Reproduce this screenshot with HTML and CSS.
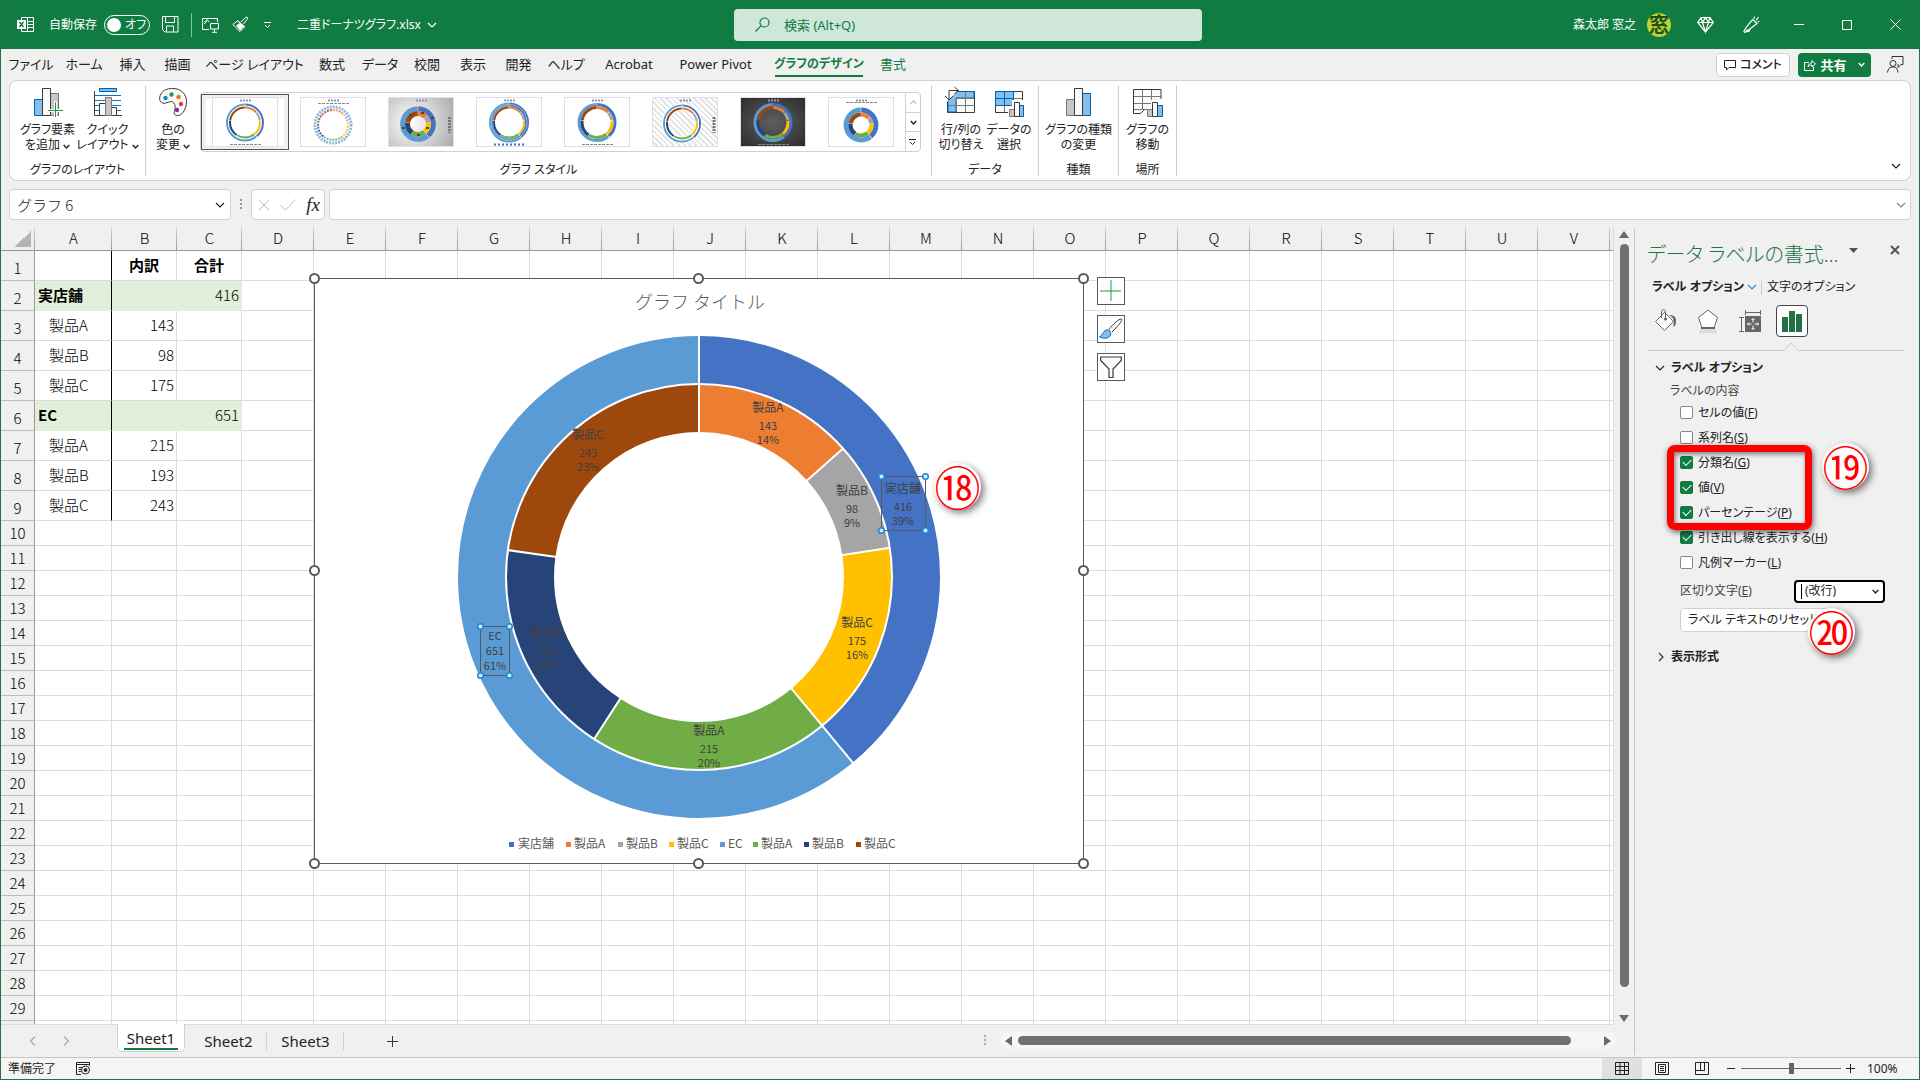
FILE: index.html
```html
<!DOCTYPE html>
<html lang="ja">
<head>
<meta charset="utf-8">
<meta name="viewport" content="width=device-width, initial-scale=1">
<title>二重ドーナツグラフ.xlsx - Excel</title>
<link rel="stylesheet" href="styles.css">
</head>
<body>
<svg class="defs" aria-hidden="true">
  <defs>
    <g id="ring-out" fill="none" transform="rotate(-90)">
      <circle r="18" pathLength="1067" stroke="#4472c4" stroke-dasharray="410 657" stroke-dashoffset="-3"/>
      <circle r="18" pathLength="1067" stroke="#5b9bd5" stroke-dasharray="645 422" stroke-dashoffset="-419"/>
    </g>
    <g id="ring-in" fill="none" transform="rotate(-90)">
      <circle r="15" pathLength="1067" stroke="#ed7d31" stroke-dasharray="137 930" stroke-dashoffset="-3"/>
      <circle r="15" pathLength="1067" stroke="#a5a5a5" stroke-dasharray="92 975" stroke-dashoffset="-146"/>
      <circle r="15" pathLength="1067" stroke="#ffc000" stroke-dasharray="169 898" stroke-dashoffset="-244"/>
      <circle r="15" pathLength="1067" stroke="#70ad47" stroke-dasharray="209 858" stroke-dashoffset="-419"/>
      <circle r="15" pathLength="1067" stroke="#264478" stroke-dasharray="187 880" stroke-dashoffset="-634"/>
      <circle r="15" pathLength="1067" stroke="#9e480e" stroke-dasharray="237 830" stroke-dashoffset="-827"/>
    </g>
    <g id="mini-title"><path d="M27 2.500h11" stroke="#999" stroke-width="2" stroke-dasharray="2 1"/></g>
    <g id="mini-legend"><path d="M17 46.500h31" stroke="#888" stroke-width="1" stroke-dasharray="3 1"/></g>
    <g id="chev"><path d="M1 1l4 4 4-4" fill="none" stroke="currentColor" stroke-width="1.200"/></g>
    <g id="chev-s"><path d="M1 1l4 4 4-4" fill="none" stroke="currentColor" stroke-width="2"/></g>
  </defs>
</svg>

<header class="titlebar">
  <div class="title-left">
    <svg width="17" height="17" viewBox="0 0 17 17" fill="none" stroke="#fff"><path d="M4.500 4V1.500h12v14h-12V13M10.500 1.500v14M10 5.500h6M10 8.500h6M10 11.500h6"/><path d="M0 4h9v9H0z" fill="#fff" stroke="none"/><path d="M2.500 6l4 5M6.500 6l-4 5" stroke="#107c41" stroke-width="1.500"/></svg>
    <span class="autosave">自動保存</span>
    <button class="toggle" aria-label="自動保存"><i></i>オフ</button>
    <button class="tb save" aria-label="上書き保存"><svg width="17" height="17" viewBox="0 0 17 17" fill="none" stroke="#fff"><path d="M.5.5h15.500v15.500H3L.5 13.500zM3.500.5v6h9v-6M4.500 16v-6h7v6"/></svg></button>
    <i class="tb-sep"></i>
    <button class="tb present" aria-label="表示"><svg width="18" height="16" viewBox="0 0 18 16" fill="none" stroke="#fff"><path d="M7 12.500H.5v-11h15V5M2.500 5L5 2.500 7 5M9 6.500h7.500v5.500H8.500V6.500zM12.500 12v3M10 15.300h5M2 7l3-3"/></svg></button>
    <button class="tb brush" aria-label="書式のコピー"><svg width="17" height="17" viewBox="0 0 17 17" fill="none" stroke="#fff"><path d="M9 6l5-5 2 1-4.500 6M5.500 4.500l7.500 6.500"/><path d="M5.500 5L.8 8.500 8 15.500l4.500-4.500z"/><path d="M4 9.500l4 5 4-4-4-3.500z" fill="#fff" stroke="none"/></svg></button>
    <button class="tb more" aria-label="クイック アクセス"><svg width="8" height="8" viewBox="0 0 8 8" fill="none" stroke="#fff"><path d="M0 1.500h7M1 4l2.500 2.500L6 4"/></svg></button>
    <button class="filename">二重ドーナツグラフ.xlsx <svg width="10" height="6"><use href="#chev"/></svg></button>
  </div>
  <label class="search"><svg width="15" height="15" viewBox="0 0 15 15" fill="none" stroke="#107c41" stroke-width="1.200"><circle cx="9.500" cy="5.500" r="4.500"/><path d="M6.200 8.700L.5 14.500"/></svg><input type="text" placeholder="検索 (Alt+Q)" aria-label="検索"></label>
  <div class="title-right">
    <span>森太郎 窓之</span>
    <span class="avatar">窓</span>
    <button class="win gem" aria-label="Premium"><svg width="17" height="16" viewBox="0 0 17 16" fill="none" stroke="#fff" stroke-width="1.200"><path d="M4 .7h9l3.300 4.800-7.800 9.500L.7 5.500zM.7 5.500h15.600M4 .7l1.500 4.800 3 9.500 3-9.500L13 .7M5.500 5.500l3-4.800 3 4.800"/></svg></button>
    <button class="win" aria-label="ペン"><svg width="17" height="18" viewBox="0 0 17 18" fill="none" stroke="#fff" stroke-width="1.200"><path d="M9.500 3.500l4.500 4L5.500 14 2 16.500 1 15.500l2-4zM7 13c-1 4-4 3-3 .5M11 3l.5-2.500M13 4.500L15.500 1M14.500 6l2-.5"/></svg></button>
    <button class="win" aria-label="最小化"><svg width="10" height="10"><path d="M0 4.500h10" stroke="#fff"/></svg></button>
    <button class="win" aria-label="最大化"><svg width="10" height="10"><path d="M.5.5h9v9h-9z" fill="none" stroke="#fff"/></svg></button>
    <button class="win" aria-label="閉じる"><svg width="11" height="11"><path d="M.5.5l10 10M10.500.5l-10 10" stroke="#fff"/></svg></button>
  </div>
</header>

<nav class="tabs">
  <div class="tablist">
    <a href="#">ファイル</a><a href="#">ホーム</a><a href="#">挿入</a><a href="#">描画</a><a href="#">ページ レイアウト</a><a href="#">数式</a><a href="#">データ</a><a href="#">校閲</a><a href="#">表示</a><a href="#">開発</a><a href="#">ヘルプ</a><a href="#">Acrobat</a><a href="#">Power Pivot</a><a href="#" class="ctx current">グラフのデザイン</a><a href="#" class="ctx">書式</a>
  </div>
  <div class="tab-actions">
    <button class="comment"><svg width="12" height="12" viewBox="0 0 12 12" fill="none" stroke="#222"><path d="M.5 1.500h11v7H5L2.500 11V8.500h-2z"/></svg>コメント</button>
    <button class="share"><svg width="12" height="12" viewBox="0 0 12 12" fill="none" stroke="#fff"><path d="M5 3.500H.5v8h9V8M4 8c.5-3 2-4 4-4V1.500L11.500 5 8 8V6C6 6 5 6.500 4 8z"/></svg>共有<svg width="7" height="5" viewBox="0 0 10 6"><use href="#chev-s"/></svg></button>
    <button class="person" aria-label="ユーザー"><svg width="17" height="17" viewBox="0 0 17 17" fill="none" stroke="#333"><circle cx="6" cy="7.500" r="3"/><path d="M.5 16.500c.5-4 2.500-5.500 5.500-5.500s4.500 1.500 5 5.500M5 3V.5h11v8h-2l-3 3V8"/></svg></button>
  </div>
</nav>

<section class="ribbon">
  <div class="group g-layout">
    <div class="group-body">
      <button class="big"><svg width="30" height="30" viewBox="0 0 30 30"><path d="M1.500 12.500h8v16h-8z" fill="#83beec" stroke="#0063b1"/><path d="M17.500 6.500h8v22h-8z" fill="#c8c6c4" stroke="#797774"/><path d="M9.500 1.500h8v27h-8z" fill="#fafafa" stroke="#3a3a38"/><path d="M22.500 14v16M15 23.500h15" stroke="#fff" stroke-width="3"/><path d="M22.500 15v15M15 23.500h15" stroke="#1e9b45"/></svg><span>グラフ要素<br>を追加 <svg width="7" height="5" viewBox="0 0 10 6"><use href="#chev-s"/></svg></span></button>
      <button class="big"><svg width="30" height="30" viewBox="0 0 30 30" fill="none"><path d="M2 8.500h26M2 13.500h26M2 18.500h26M2 23.500h26" stroke="#0078d4"/><path d="M6.500 1.500h17v3h-17z" fill="#83beec" stroke="#0063b1"/><path d="M1.500 4v24.500H29" stroke="#3a3a38"/><path d="M6.500 16.500h6v12h-6zM18.500 20.500h5v8h-5z" fill="#fafafa" stroke="#3a3a38"/><path d="M12.500 10.500h6v18h-6z" fill="#c8c6c4" stroke="#797774"/></svg><span>クイック<br>レイアウト <svg width="7" height="5" viewBox="0 0 10 6"><use href="#chev-s"/></svg></span></button>
    </div>
    <div class="group-name">グラフのレイアウト</div>
  </div>
  <div class="group g-style">
    <div class="group-body">
      <button class="big narrow"><svg width="30" height="30" viewBox="0 0 30 30"><path d="M15 1.500c8 0 13.500 5.500 13.500 13 0 7-4 13.500-8 14-4 .5-5-2-4-5s1-5.500-1-8c-3-3-7 2-11 .5C.5 14.500 1 9 4 5.500S11 1.500 15 1.500z" fill="#fafafa" stroke="#3a3a38"/><circle cx="7.500" cy="11" r="2.200" fill="#0a84d8"/><circle cx="13.500" cy="7.500" r="2.200" fill="#1e9b45"/><circle cx="20.500" cy="10" r="2.200" fill="#e57400"/><circle cx="23" cy="17" r="2.200" fill="#e83c3c"/><circle cx="19" cy="23" r="2.200" fill="#8a2da5"/></svg><span>色の<br>変更 <svg width="7" height="5" viewBox="0 0 10 6"><use href="#chev-s"/></svg></span></button>
      <div class="gallery">
        <button class="thumb selected" aria-label="スタイル 1"><svg width="64" height="48" viewBox="0 0 64 48"><use href="#mini-title"/><use href="#mini-legend"/><g transform="translate(32 24.500)"><use href="#ring-out" stroke-width="2"/><use href="#ring-in" stroke-width="2"/></g></svg></button>
        <button class="thumb" aria-label="スタイル 2"><svg width="64" height="48" viewBox="0 0 64 48"><use href="#mini-title"/><path d="M17 5.500h31" stroke="#888" stroke-dasharray="3 1"/><g transform="translate(32 27)"><circle r="18" fill="none" stroke="#8db9e6" stroke-width="3" stroke-dasharray="2 1"/><g opacity=".8"><use href="#ring-in" stroke-width="2"/></g><circle r="15" fill="none" stroke="#fff" stroke-width="3" stroke-dasharray="1 2"/></g></svg></button>
        <button class="thumb silver" aria-label="スタイル 3"><svg width="64" height="48" viewBox="0 0 64 48"><use href="#mini-title"/><path d="M60.500 19v16" stroke="#777" stroke-width="3" stroke-dasharray="2 1"/><g transform="translate(29 26)"><g transform="scale(.85)"><use href="#ring-out" stroke-width="6"/></g><g transform="scale(.7)"><use href="#ring-in" stroke-width="7"/></g><path d="M-16 4h3M13-6h3M-9-9h3M3-11h3M-1 11h3M8 4h3M-11 4h3" stroke="#444" stroke-width="2"/></g></svg></button>
        <button class="thumb" aria-label="スタイル 4"><svg width="64" height="48" viewBox="0 0 64 48"><use href="#mini-title"/><path d="M17 46.500h31" stroke="#4472c4" stroke-width="2" stroke-dasharray="2 2"/><g transform="translate(32 24.500)"><use href="#ring-out" stroke-width="4"/><circle r="18" fill="none" stroke="#9bc" stroke-width="1"/><use href="#ring-in" stroke-width="2"/></g></svg></button>
        <button class="thumb" aria-label="スタイル 5"><svg width="64" height="48" viewBox="0 0 64 48"><use href="#mini-title"/><use href="#mini-legend"/><g transform="translate(32 24.500)"><use href="#ring-out" stroke-width="3"/><use href="#ring-in" stroke-width="3"/></g></svg></button>
        <button class="thumb hatch" aria-label="スタイル 6"><svg width="64" height="48" viewBox="0 0 64 48"><use href="#mini-title"/><path d="M61 19v16" stroke="#777" stroke-width="3" stroke-dasharray="2 1"/><g transform="translate(29 25.500)"><circle r="18" fill="none" stroke="#fff" stroke-width="4"/><use href="#ring-out" stroke-width="2"/><circle r="15" fill="none" stroke="#fff" stroke-width="4"/><use href="#ring-in" stroke-width="2"/></g></svg></button>
        <button class="thumb dark" aria-label="スタイル 7"><svg width="64" height="48" viewBox="0 0 64 48"><use href="#mini-title"/><use href="#mini-legend"/><g transform="translate(32 24.500)"><use href="#ring-out" stroke-width="3"/><use href="#ring-in" stroke-width="3"/></g></svg></button>
        <button class="thumb" aria-label="スタイル 8"><svg width="64" height="48" viewBox="0 0 64 48"><use href="#mini-title"/><path d="M17 4.500h31" stroke="#888" stroke-dasharray="3 1"/><g transform="translate(32 27)"><g transform="scale(.83)"><use href="#ring-out" stroke-width="6"/></g><g transform="scale(.7)"><use href="#ring-in" stroke-width="6"/></g></g></svg></button>
        <div class="gal-nav">
          <button class="off" aria-label="上へ"><svg width="7" height="5" viewBox="0 0 10 6"><path d="M1 5l4-4 4 4" fill="none" stroke="#b5b5b5" stroke-width="1.500"/></svg></button>
          <button aria-label="下へ"><svg width="7" height="5" viewBox="0 0 10 6"><use href="#chev-s"/></svg></button>
          <button aria-label="その他"><svg width="8" height="8" viewBox="0 0 8 8" fill="none" stroke="#222"><path d="M0 1.500h7M1 4l2.500 2.500L6 4"/></svg></button>
        </div>
      </div>
    </div>
    <div class="group-name">グラフ スタイル</div>
  </div>
  <div class="group g-data">
    <div class="group-body">
      <button class="big mid"><svg width="30" height="32" viewBox="0 0 30 32" fill="none"><path d="M1.500 6.500h27v21h-27z" fill="#fafafa" stroke="#3a3a38"/><path d="M2 6.500h26V13H10v14H2z" fill="#83beec" stroke="#0063b1"/><path d="M10.500 13v14M19.500 7v20M2 20.500h27M10 13.500h18" stroke="#797774"/><path d="M1 16V4h12L1 17" fill="#fff"/><path d="M3 14.500V5.500h9M8.500 2l4 3.500-4 3.500M-1 11l4 4 4-4" stroke="#3a3a38"/></svg><span>行/列の<br>切り替え</span></button>
      <button class="big mid"><svg width="30" height="32" viewBox="0 0 30 32" fill="none"><path d="M1.500 6.500h27v21h-27z" fill="#fafafa" stroke="#3a3a38"/><path d="M1.500 6.500h18v14h-18z" fill="#83beec" stroke="#0063b1"/><path d="M10.500 7v13M2 13.500h17.500" stroke="#0063b1"/><path d="M20 13.500h8M10.500 21v6" stroke="#797774"/><path d="M14 22h4v-7h13v17H14z" fill="#fff"/><path d="M15.500 24.500h5v7h-5z" fill="#c8c6c4" stroke="#797774"/><path d="M25.500 20.500h4v11h-4z" fill="#83beec" stroke="#0063b1"/><path d="M20.500 17.500h5v14h-5z" fill="#fafafa" stroke="#3a3a38"/></svg><span>データの<br>選択</span></button>
    </div>
    <div class="group-name">データ</div>
  </div>
  <div class="group g-type">
    <div class="group-body">
      <button class="big"><svg width="30" height="30" viewBox="0 0 30 30"><path d="M2.500 12.500h8v16h-8z" fill="#c8c6c4" stroke="#797774"/><path d="M18.500 6.500h8v22h-8z" fill="#83beec" stroke="#0063b1"/><path d="M10.500 1.500h8v27h-8z" fill="#fafafa" stroke="#3a3a38"/></svg><span>グラフの種類<br>の変更</span></button>
    </div>
    <div class="group-name">種類</div>
  </div>
  <div class="group g-place">
    <div class="group-body">
      <button class="big mid"><svg width="30" height="32" viewBox="0 0 30 32" fill="none"><path d="M.5 4.500h27v23l-17 1H.5z" fill="#fafafa"/><path d="M1 11.500h27M1 18.500h27M1 24.500h27M9.500 5v20M18.500 5v20" stroke="#797774"/><path d="M14 22h4v-7h12v17H14z" fill="#fff"/><path d="M28 14V4.500H.5v24h7l4-4" stroke="#3a3a38"/><path d="M14.500 24.500h5v7h-5z" fill="#c8c6c4" stroke="#797774"/><path d="M24.500 20.500h5v11h-5z" fill="#83beec" stroke="#0063b1"/><path d="M19.500 17.500h5v14h-5z" fill="#fafafa" stroke="#3a3a38"/></svg><span>グラフの<br>移動</span></button>
    </div>
    <div class="group-name">場所</div>
  </div>
  <button class="collapse" aria-label="リボンを折りたたむ"><svg width="10" height="6"><use href="#chev"/></svg></button>
</section>

<section class="formula-row">
  <div class="namebox"><input type="text" value="グラフ 6" aria-label="名前ボックス"><svg width="10" height="6"><use href="#chev"/></svg></div>
  <svg class="grip" width="2" height="11"><path d="M1 0v11" stroke="#999" stroke-width="2" stroke-dasharray="2 2"/></svg>
  <div class="fx"><svg width="12" height="12"><path d="M.5.5l11 11M11.500.5l-11 11" stroke="#c0c0c0"/></svg><svg width="16" height="12"><path d="M.5 6l5 5L15.500.5" fill="none" stroke="#c0c0c0"/></svg><button>fx</button></div>
  <div class="formula"><input type="text" aria-label="数式バー"><svg width="10" height="6"><use href="#chev"/></svg></div>
</section>

<main class="work">
  <div class="book">
    <div class="sheet-row">
      <div class="sheet">
        <table>
          <colgroup><col class="c-h"><col class="c-a"><col class="c-b"><col class="c-b"><col span="18" class="c-n"><col class="c-n"><col></colgroup>
          <thead><tr><th class="corner"></th><th>A</th><th>B</th><th>C</th><th>D</th><th>E</th><th>F</th><th>G</th><th>H</th><th>I</th><th>J</th><th>K</th><th>L</th><th>M</th><th>N</th><th>O</th><th>P</th><th>Q</th><th>R</th><th>S</th><th>T</th><th>U</th><th>V</th><th></th></tr></thead>
          <tbody class="data">
            <tr><th>1</th><td></td><td class="hd">内訳</td><td class="hd">合計</td><td class="rest" colspan="20"></td></tr>
            <tr class="sum"><th>2</th><td>実店舗</td><td></td><td>416</td><td class="rest" colspan="20"></td></tr>
            <tr><th>3</th><td>製品A</td><td>143</td><td></td><td class="rest" colspan="20"></td></tr>
            <tr><th>4</th><td>製品B</td><td>98</td><td></td><td class="rest" colspan="20"></td></tr>
            <tr><th>5</th><td>製品C</td><td>175</td><td></td><td class="rest" colspan="20"></td></tr>
            <tr class="sum"><th>6</th><td>EC</td><td></td><td>651</td><td class="rest" colspan="20"></td></tr>
            <tr><th>7</th><td>製品A</td><td>215</td><td></td><td class="rest" colspan="20"></td></tr>
            <tr><th>8</th><td>製品B</td><td>193</td><td></td><td class="rest" colspan="20"></td></tr>
            <tr><th>9</th><td>製品C</td><td>243</td><td></td><td class="rest" colspan="20"></td></tr>
          </tbody>
          <tbody class="blank">
            <tr><th>10</th><td></td><td></td><td></td><td class="rest" colspan="20"></td></tr>
            <tr><th>11</th><td></td><td></td><td></td><td class="rest" colspan="20"></td></tr>
            <tr><th>12</th><td></td><td></td><td></td><td class="rest" colspan="20"></td></tr>
            <tr><th>13</th><td></td><td></td><td></td><td class="rest" colspan="20"></td></tr>
            <tr><th>14</th><td></td><td></td><td></td><td class="rest" colspan="20"></td></tr>
            <tr><th>15</th><td></td><td></td><td></td><td class="rest" colspan="20"></td></tr>
            <tr><th>16</th><td></td><td></td><td></td><td class="rest" colspan="20"></td></tr>
            <tr><th>17</th><td></td><td></td><td></td><td class="rest" colspan="20"></td></tr>
            <tr><th>18</th><td></td><td></td><td></td><td class="rest" colspan="20"></td></tr>
            <tr><th>19</th><td></td><td></td><td></td><td class="rest" colspan="20"></td></tr>
            <tr><th>20</th><td></td><td></td><td></td><td class="rest" colspan="20"></td></tr>
            <tr><th>21</th><td></td><td></td><td></td><td class="rest" colspan="20"></td></tr>
            <tr><th>22</th><td></td><td></td><td></td><td class="rest" colspan="20"></td></tr>
            <tr><th>23</th><td></td><td></td><td></td><td class="rest" colspan="20"></td></tr>
            <tr><th>24</th><td></td><td></td><td></td><td class="rest" colspan="20"></td></tr>
            <tr><th>25</th><td></td><td></td><td></td><td class="rest" colspan="20"></td></tr>
            <tr><th>26</th><td></td><td></td><td></td><td class="rest" colspan="20"></td></tr>
            <tr><th>27</th><td></td><td></td><td></td><td class="rest" colspan="20"></td></tr>
            <tr><th>28</th><td></td><td></td><td></td><td class="rest" colspan="20"></td></tr>
            <tr><th>29</th><td></td><td></td><td></td><td class="rest" colspan="20"></td></tr>
            <tr><th></th><td></td><td></td><td></td><td class="rest" colspan="20"></td></tr>
          </tbody>
        </table>

        <svg class="chart" width="770" height="586" viewBox="0 0 770 586">
          <rect x=".5" y=".5" width="769" height="585" fill="#fff" stroke="#595959"/>
          <text class="chart-title" x="386" y="31">グラフ タイトル</text>
          <g transform="translate(385 299)">
            <g fill="none" stroke-width="48" transform="rotate(-90)">
              <circle r="217" pathLength="1067" stroke="#4472c4" stroke-dasharray="416 651"/>
              <circle r="217" pathLength="1067" stroke="#5b9bd5" stroke-dasharray="651 416" stroke-dashoffset="-416"/>
              <circle r="169" pathLength="1067" stroke="#ed7d31" stroke-dasharray="143 924"/>
              <circle r="169" pathLength="1067" stroke="#a5a5a5" stroke-dasharray="98 969" stroke-dashoffset="-143"/>
              <circle r="169" pathLength="1067" stroke="#ffc000" stroke-dasharray="175 892" stroke-dashoffset="-241"/>
              <circle r="169" pathLength="1067" stroke="#70ad47" stroke-dasharray="215 852" stroke-dashoffset="-416"/>
              <circle r="169" pathLength="1067" stroke="#264478" stroke-dasharray="193 874" stroke-dashoffset="-631"/>
              <circle r="169" pathLength="1067" stroke="#9e480e" stroke-dasharray="243 824" stroke-dashoffset="-824"/>
            </g>
            <g fill="none" stroke="#fff" stroke-width="2">
              <circle r="193"/>
              <path d="M0-144v-98"/>
              <path d="M0-144v-98" transform="rotate(140.360)"/>
              <path d="M0-144v-49" transform="rotate(48.250)"/>
              <path d="M0-144v-49" transform="rotate(81.310)"/>
              <path d="M0-144v-49" transform="rotate(212.900)"/>
              <path d="M0-144v-49" transform="rotate(278.010)"/>
            </g>
          </g>
          <g class="label">
            <g transform="translate(454 130)"><text y="4">製品A</text><text class="num" y="22">143</text><text class="num" y="36">14%</text></g>
            <g transform="translate(538 213)"><text y="4">製品B</text><text class="num" y="22">98</text><text class="num" y="36">9%</text></g>
            <g transform="translate(589 211)"><text y="4">実店舗</text><text class="num" y="22">416</text><text class="num" y="36">39%</text></g>
            <g transform="translate(543 345)"><text y="4">製品C</text><text class="num" y="22">175</text><text class="num" y="36">16%</text></g>
            <g transform="translate(395 453)"><text y="4">製品A</text><text class="num" y="22">215</text><text class="num" y="36">20%</text></g>
            <g transform="translate(232 355)"><text y="4">製品B</text><text class="num" y="22">193</text><text class="num" y="36">18%</text></g>
            <g transform="translate(274 157)"><text y="4">製品C</text><text class="num" y="22">243</text><text class="num" y="36">23%</text></g>
            <g transform="translate(181 358)"><text class="num" y="4">EC</text><text class="num" y="19">651</text><text class="num" y="34">61%</text></g>
          </g>
          <g fill="none" stroke="#595959"><path d="M567.500 198.500h44v54h-44zM166.500 348.500h29v49h-29z"/></g>
          <g fill="#d3e8f8" stroke="#1f86d8" stroke-width="1.500"><circle cx="567.500" cy="198.500" r="2.800"/><circle cx="611.500" cy="198.500" r="2.800"/><circle cx="567.500" cy="252.500" r="2.800"/><circle cx="611.500" cy="252.500" r="2.800"/><circle cx="166.500" cy="348.500" r="2.800"/><circle cx="195.500" cy="348.500" r="2.800"/><circle cx="166.500" cy="397.500" r="2.800"/><circle cx="195.500" cy="397.500" r="2.800"/></g>
          <g class="legend">
            <path fill="#4472c4" d="M195 564h5v5h-5z"/><text x="204" y="570">実店舗</text>
            <path fill="#ed7d31" d="M252 564h5v5h-5z"/><text x="260" y="570">製品A</text>
            <path fill="#a5a5a5" d="M304 564h5v5h-5z"/><text x="312" y="570">製品B</text>
            <path fill="#ffc000" d="M355 564h5v5h-5z"/><text x="363" y="570">製品C</text>
            <path fill="#5b9bd5" d="M406 564h5v5h-5z"/><text x="414" y="570">EC</text>
            <path fill="#70ad47" d="M439 564h5v5h-5z"/><text x="447" y="570">製品A</text>
            <path fill="#264478" d="M490 564h5v5h-5z"/><text x="498" y="570">製品B</text>
            <path fill="#9e480e" d="M542 564h5v5h-5z"/><text x="550" y="570">製品C</text>
          </g>
          <g fill="#fff" stroke="#595959" stroke-width="2"><circle cx=".5" cy=".5" r="4.500"/><circle cx="384.500" cy=".5" r="4.500"/><circle cx="769.500" cy=".5" r="4.500"/><circle cx=".5" cy="292.500" r="4.500"/><circle cx="769.500" cy="292.500" r="4.500"/><circle cx=".5" cy="585.500" r="4.500"/><circle cx="384.500" cy="585.500" r="4.500"/><circle cx="769.500" cy="585.500" r="4.500"/></g>
        </svg>
        <div class="chart-tools">
          <button aria-label="グラフ要素"><svg width="22" height="22"><path d="M11 0v21M0 11h21" stroke="#1e9b45"/></svg></button>
          <button aria-label="グラフ スタイル"><svg width="24" height="22" viewBox="0 0 24 22"><path d="M10 11.500C14 6 20 1 22 1s1 3-9 13" fill="#fafafa" stroke="#3a3a38"/><path d="M.5 18.500c3 0 3-5.500 7-6.500 3-.5 5 2 4 5-1.500 4-8 4-11 1.500z" fill="#83beec" stroke="#0063b1"/></svg></button>
          <button aria-label="グラフ フィルター"><svg width="22" height="22"><path d="M.7 1h20.600v3.500L13 13v8.500H9V13L.7 4.500z" fill="#fafafa" stroke="#3a3a38" stroke-width="1.200"/></svg></button>
        </div>
        <span class="badge b18">⑱</span>
      </div>
      <div class="vscroll"><i class="up"></i><i class="thumb-v"></i><i class="space-v"></i><i class="down"></i></div>
    </div>
    <div class="sheetbar">
      <button class="nav" aria-label="前へ"><svg width="6" height="10"><path d="M5 .5L.7 5 5 9.500" fill="none" stroke="#aaa" stroke-width="1.300"/></svg></button>
      <button class="nav" aria-label="次へ"><svg width="6" height="10"><path d="M1 .5L5.300 5 1 9.500" fill="none" stroke="#aaa" stroke-width="1.300"/></svg></button>
      <button class="stab active"><span>Sheet1</span></button>
      <button class="stab">Sheet2</button>
      <button class="stab">Sheet3</button>
      <button class="add" aria-label="新しいシート"><svg width="11" height="11"><path d="M5.500 0v11M0 5.500h11" stroke="#333"/></svg></button>
      <svg class="grip2" width="2" height="11"><path d="M1 0v11" stroke="#aaa" stroke-width="2" stroke-dasharray="2 2"/></svg>
      <div class="hscroll"><i class="left"></i><i class="thumb-h"></i><i class="space-h"></i><i class="right"></i></div>
    </div>
  </div>

  <aside class="pane">
    <div class="pane-title"><h2>データ ラベルの書式...</h2><button aria-label="オプション"><svg width="9" height="5"><path d="M0 0h9L4.500 5z" fill="#555"/></svg></button><button aria-label="閉じる"><svg width="10" height="10"><path d="M1 1l8 8M9 1L1 9" stroke="#555" stroke-width="2"/></svg></button></div>
    <div class="pane-tabs"><button class="strong">ラベル オプション<svg width="10" height="6"><use href="#chev"/></svg></button><button>文字のオプション</button></div>
    <div class="pane-icons">
      <button aria-label="塗りつぶしと線"><svg width="24" height="24" viewBox="0 0 24 24" fill="none" stroke="#666"><path d="M10.500 3.500l9 9-9 9-9-9z" fill="#fff"/><path d="M7.500 9V3c0-3 4-3 4 0v7" /><path d="M15 6c5 0 7.500 2 7 7-.3 3-1 4-2.500 5 0-4 1-7-1.500-10z" fill="#666" stroke="none"/><circle cx="11.500" cy="10" r="1.200" fill="#666"/></svg></button>
      <button aria-label="効果"><svg width="22" height="24" viewBox="0 0 22 24" fill="none" stroke="#666"><path d="M3 19.500L2 24h18l-1-4.500z" fill="#ddd" stroke="none"/><path d="M11 1l9.500 7.500L17 19H5L1.500 8.500z" fill="#fff"/><path d="M4 19h14" stroke-width="2"/></svg></button>
      <button aria-label="サイズとプロパティ"><svg width="22" height="22" viewBox="0 0 22 22" fill="none" stroke="#666"><path d="M0 7.500h5M2.500 8v13M0 21.500h5M6.500 0v5M7 2.500h14M21.500 0v5"/><path d="M6 6h16v16H6z" fill="#666" stroke="none"/><path d="M14 8.500v4M14 15.500v4M8.500 14h4M15.500 14h4M12.500 10l1.500-1.500 1.500 1.500M12.500 18l1.500 1.500 1.500-1.500M10 12.500L8.500 14l1.500 1.500M18 12.500l1.500 1.500-1.500 1.500" stroke="#fff"/></svg></button>
      <button class="on" aria-label="ラベル オプション"><svg width="20" height="21"><path d="M0 6h6v15H0zM7 0h6v21H7zM14 3h6v18h-6z" fill="#217346"/></svg></button>
    </div>
    <div class="pane-rule"><i></i><svg width="14" height="9"><path d="M.5 8.500L7 1l6.500 7.500" fill="#f0f0f0" stroke="#ccc"/></svg><i></i></div>
    <h3><svg width="10" height="6"><use href="#chev"/></svg>ラベル オプション</h3>
    <div class="options">
      <p>ラベルの内容</p>
      <div class="checks">
        <label><input type="checkbox"><span>セルの値(<u>F</u>)</span></label>
        <label><input type="checkbox"><span>系列名(<u>S</u>)</span></label>
        <label><input type="checkbox" checked><span>分類名(<u>G</u>)</span></label>
        <label><input type="checkbox" checked><span>値(<u>V</u>)</span></label>
        <label><input type="checkbox" checked><span>パーセンテージ(<u>P</u>)</span></label>
        <label><input type="checkbox" checked><span>引き出し線を表示する(<u>H</u>)</span></label>
        <label><input type="checkbox"><span>凡例マーカー(<u>L</u>)</span></label>
        <div class="sep-row"><label for="sep">区切り文字(<u>E</u>)</label><div class="combo"><select id="sep"><option>(改行)</option></select><svg width="7" height="5" viewBox="0 0 10 6"><use href="#chev-s"/></svg></div></div>
        <button class="reset">ラベル テキストのリセット(<u>R</u>)</button>
      </div>
    </div>
    <h3 class="closed"><svg width="6" height="10"><path d="M1 1l4 4-4 4" fill="none" stroke="#333" stroke-width="1.200"/></svg>表示形式</h3>
    <i class="redbox"></i>
    <span class="badge b19">⑲</span>
    <span class="badge b20">⑳</span>
  </aside>
</main>

<footer class="status">
  <span>準備完了</span>
  <svg width="15" height="13" viewBox="0 0 15 13" fill="none" stroke="#222"><path d="M5 12.500H.5v-12h13V4M1 2.500h12M2.500 5.500H6M2.500 7.500H5M2.500 9.500H5"/><circle cx="9.500" cy="8" r="4"/><circle cx="9.500" cy="8" r="1.500" fill="#222"/></svg>
  <div class="views">
    <button class="on" aria-label="標準"><svg width="14" height="13"><path d="M.5.5h13v12H.5zM1 4.500h12M1 8.500h12M5 1v11M9.500 1v11" fill="none" stroke="#222"/></svg></button>
    <button aria-label="ページ レイアウト"><svg width="14" height="13"><path d="M.5.5h13v12H.5zM3.500 2.500h7v8h-7zM5 4.500h4M5 6.500h4M5 8.500h4" fill="none" stroke="#222"/></svg></button>
    <button aria-label="改ページ プレビュー"><svg width="14" height="13"><path d="M.5.5h13v12H.5zM5.500 1v7.500M9.500 1v7.500M1 8.500h8.500" fill="none" stroke="#222"/></svg></button>
  </div>
  <div class="zoom"><button aria-label="縮小"><svg width="9" height="9"><path d="M0 4.500h8" stroke="#222"/></svg></button><input type="range" min="0" max="100" value="50" aria-label="ズーム"><button aria-label="拡大"><svg width="9" height="9"><path d="M0 4.500h9M4.500 0v9" stroke="#222"/></svg></button><span>100%</span></div>
</footer>
</body>
</html>
```
FILE: styles.css
```css
:root { --green: #107c41; --chrome: #f0f0f0; --line: #d0d0d0; --grid: #dcdcdc; }
* { box-sizing: border-box; }
body { margin: 0; height: 100vh; display: flex; flex-direction: column; overflow: hidden; background: var(--chrome); border: 1px solid #217346; border-top: 0; color: #222; font: 12px/16px "Noto Sans", "Noto Sans CJK JP", sans-serif; font-feature-settings: "palt"; }
button, input, select { font: inherit; font-feature-settings: inherit; color: inherit; background: none; border: 0; padding: 0; margin: 0; }
button { display: inline-flex; align-items: center; justify-content: center; white-space: nowrap; }
a { color: inherit; text-decoration: none; }
svg { flex: none; overflow: visible; }
.defs { position: absolute; width: 0; height: 0; }

/* title bar */
.titlebar { flex: none; height: 49px; background: var(--green); color: #fff; display: grid; grid-template-columns: minmax(0, 1fr) 468px minmax(0, 1fr); align-items: center; padding-left: 16px; }
.title-left, .title-right { display: flex; align-items: center; }
.autosave { width: 55px; margin-left: 15px; }
.toggle { width: 46px; height: 20px; border: 1px solid #fff; border-radius: 10px; justify-content: flex-start; gap: 4px; padding-left: 2px; }
.toggle i { flex: none; width: 14px; height: 14px; border-radius: 50%; background: #fff; }
.tb { width: 30px; height: 30px; }
.save { width: 41px; }
.tb-sep { width: 1px; height: 24px; background: #8cc0a3; }
.present { width: 37px; }
.brush { width: 22px; }
.more { width: 34px; }
.filename { margin-left: 12px; gap: 6px; }
.search { height: 32px; border-radius: 4px; background: #cfe6da; display: flex; align-items: center; gap: 14px; padding-left: 21px; color: var(--green); font-size: 13px; }
.search input { flex: 1; }
.search input::placeholder { color: var(--green); opacity: 1; }
.title-right { justify-content: flex-end; }
.avatar { width: 24px; height: 24px; border-radius: 50%; margin: 0 12px 0 11px; background: #b5d334; color: #1e4d18; font-weight: 700; font-size: 20px; line-height: 24px; text-align: center; }
.win { width: 48px; height: 30px; }
.gem { width: 44px; }

/* ribbon tabs */
.tabs { flex: none; height: 31px; display: flex; justify-content: space-between; padding: 0 8px 0 2px; }
.tablist { display: grid; grid-template-columns: 56px 50px 47px 43px 111px 44px 52px 42px 50px 41px 54px 72px 101px 106px 42px; font-size: 13px; }
.tablist a { display: flex; align-items: center; justify-content: center; white-space: nowrap; border-bottom: 2px solid transparent; margin-bottom: 3px; padding-top: 4px; line-height: 20px; }
.ctx { color: var(--green); }
.tablist .current { font-weight: 700; font-size: 12px; border-color: var(--green); margin-left: 9px; margin-right: 9px; }
.tab-actions { display: flex; align-items: center; gap: 8px; }
.comment { width: 74px; height: 24px; border: 1px solid var(--line); border-radius: 4px; background: #fff; gap: 4px; font-weight: 500; }
.share { width: 73px; height: 24px; border-radius: 4px; background: var(--green); color: #fff; font-weight: 700; gap: 4px; font-size: 13px; }
.share svg:last-child { margin-left: 7px; }
.person { width: 32px; height: 24px; }

/* ribbon */
.ribbon { flex: none; height: 101px; margin: 0 8px; background: #fff; border: 1px solid var(--line); border-radius: 8px; display: flex; padding: 4px 0; }
.group { border-right: 1px solid var(--line); display: flex; flex-direction: column; }
.group-body { flex: 1; display: flex; align-items: flex-start; justify-content: center; }
.group-name { height: 15px; line-height: 17px; text-align: center; }
.g-layout { width: 136px; }
.g-style { width: 786px; }
.g-style .group-body { justify-content: flex-start; }
.g-data { width: 107px; }
.g-type { width: 80px; }
.g-place { width: 58px; }
.big { width: 60px; height: 68px; flex-direction: column; justify-content: flex-start; padding-top: 2px; }
.big > span { line-height: 15px; margin-top: 5px; }
.mid { width: 48px; padding-top: 0; }
.narrow { width: 54px; }
.gallery { flex: none; width: 721px; height: 60px; margin-top: 7px; border: 1px solid var(--line); border-radius: 4px; display: flex; }
.thumb { flex: none; width: 88px; height: 56px; margin-top: 1px; }
.thumb svg { background: #fff; outline: 1px solid #dde; }
.selected { border: 1px solid #555; box-shadow: inset 0 0 0 4px #f0f0f0; }
.silver svg { background: radial-gradient(circle at 35% 50%, #fff, #aaa); }
.hatch svg { background: repeating-linear-gradient(45deg, #fff 0 2px, #e4e4e4 2px 4px); }
.dark svg { background: radial-gradient(#606060, #2c2c2c); }
.gal-nav { flex: 1; display: flex; flex-direction: column; border-left: 1px solid var(--line); }
.gal-nav button { flex: 1; border-bottom: 1px solid var(--line); }
.gal-nav button:last-child { border-bottom: 0; }
.collapse { margin: auto 8px 3px auto; width: 12px; height: 14px; }

/* formula bar */
.formula-row { flex: none; height: 31px; margin: 8px 8px 7px; display: flex; align-items: stretch; }
.namebox, .fx, .formula { background: #fff; border: 1px solid var(--line); border-radius: 4px; display: flex; align-items: center; }
.namebox { width: 222px; padding: 0 5px 0 7px; font: 300 15px/20px "Noto Sans CJK JP", sans-serif; font-feature-settings: normal; }
.namebox input { flex: 1; min-width: 0; }
.grip { margin: auto 9px; }
.fx { width: 74px; padding: 0 4px 0 6px; gap: 10px; }
.fx button { font: italic 400 19px/20px "Liberation Serif", serif; width: 16px; }
.formula { flex: 1; margin-left: 4px; padding-right: 4px; color: #888; }
.formula input { flex: 1; }

/* worksheet */
.work { flex: 1; min-height: 0; display: flex; }
.book { flex: 1; min-width: 0; display: flex; flex-direction: column; }
.sheet-row { flex: 1; min-height: 0; display: flex; }
.sheet { flex: 1; min-width: 0; position: relative; overflow: hidden; border-bottom: 1px solid var(--grid); }
table { table-layout: fixed; width: 100%; min-width: 1612px; border-collapse: separate; border-spacing: 0; font: 300 15px/20px "Noto Sans CJK JP", sans-serif; font-feature-settings: normal; color: #000; }
.c-h { width: 34px; }
.c-a { width: 77px; }
.c-b { width: 65px; }
.c-n { width: 72px; }
th, td { padding: 0; }
thead th { height: 24px; padding-bottom: 1px; font-weight: 300; border-bottom: 1px solid #999; background: linear-gradient(#d8d8d8, #999) right / 1px 100% no-repeat; }
thead th:last-child { background: none; }
thead .corner { background: linear-gradient(#d8d8d8, #999) right / 1px 100% no-repeat, linear-gradient(to bottom right, transparent 50%, #b4b4b4 50%) 14px 4px / 16px 16px no-repeat; }
tbody th { background: var(--chrome); border-right: 1px solid #999; border-bottom: 1px solid #bbb; font-weight: 300; }
tbody td { background-color: #fff; border-right: 1px solid var(--grid); border-bottom: 1px solid var(--grid); text-align: right; padding-right: 2px; padding-bottom: 2px; white-space: nowrap; }
.data tr { height: 30px; }
.data th { padding-top: 4px; }
.blank tr { height: 25px; }
.blank th { padding-bottom: 1px; }
.data td:nth-child(2) { text-align: left; padding-left: 14px; border-right-color: #000; }
tbody .hd { text-align: center; font-weight: 700; padding-right: 0; }
.data .sum td:nth-child(-n+4) { background-color: #e2efda; border-bottom-color: #e2efda; }
.data .sum td:nth-child(2) { font-weight: 700; padding-left: 3px; }
.data .sum td:nth-child(3), .data .sum td:nth-child(4) { border-right-color: #e2efda; }
tbody .rest { border-right: 0; background-image: repeating-linear-gradient(to right, transparent 0 71px, var(--grid) 71px 72px); }

/* objects floating on the sheet */
.chart { position: absolute; left: 313px; top: 51px; }
.chart text { font-family: "Noto Sans CJK JP", sans-serif; font-feature-settings: normal; font-weight: 400; font-size: 12px; fill: #404040; }
.chart .chart-title { font-size: 18px; font-weight: 300; fill: #595959; text-anchor: middle; }
.label { text-anchor: middle; }
.chart .num { font-size: 11px; }
.chart .legend text { fill: #595959; }
.chart-tools { position: absolute; left: 1096px; top: 50px; display: flex; flex-direction: column; gap: 10px; }
.chart-tools button { width: 28px; height: 28px; background: #fff; border: 1px solid #595959; }
.badge { position: absolute; width: 47px; height: 47px; border-radius: 50%; background: #fff; color: #f00; font: 400 46px/45px "Noto Sans CJK JP", sans-serif; text-align: center; box-shadow: 3px 3px 7px rgba(0, 0, 0, .5); }
.b18 { left: 933px; top: 236px; }

/* scroll bars */
.vscroll { flex: none; width: 21px; padding: 4px 0 3px; display: flex; flex-direction: column; align-items: center; border-left: 1px solid var(--grid); }
.up, .down { width: 0; height: 0; border: 5px solid transparent; }
.up { border-bottom: 7px solid #6a6a6a; border-top: 0; }
.down { border-top: 7px solid #6a6a6a; border-bottom: 0; }
.thumb-v { flex: 27; width: 9px; margin-top: 6px; border-radius: 5px; background: #707070; }
.space-v { flex: 1; }
.sheetbar { flex: none; height: 32px; display: flex; font-size: 15px; line-height: 20px; padding-left: 15px; }
.nav { width: 33px; }
.stab { width: 77px; position: relative; }
.stab:not(.active)::after { content: ""; position: absolute; right: 0; top: 7px; height: 18px; width: 1px; background: var(--line); }
.active { width: 68px; height: 28px; margin: -1px 5px 0 35px; background: #fff; border: 1px solid var(--line); border-top: 0; border-radius: 0 0 5px 5px; padding: 0; }
.active span { border-bottom: 2px solid var(--green); padding: 0 3px; height: 24px; line-height: 24px; margin-top: 1px; }
.add { width: 96px; }
.grip2 { margin: 10px 15px 0 auto; }
.hscroll { width: 38%; max-width: 615px; height: 17px; margin: 7px 18px 0 0; padding: 0 5px 0 4px; border-radius: 8px; background: #f6f6f6; display: flex; align-items: center; }
.left, .right { width: 0; height: 0; border: 5px solid transparent; }
.left { border-right: 7px solid #6a6a6a; border-left: 0; }
.right { border-left: 7px solid #6a6a6a; border-right: 0; }
.thumb-h { flex: 17; height: 9px; border-radius: 5px; background: #707070; margin-left: 6px; }
.space-h { flex: 1; }

/* format pane */
.pane { flex: none; width: 285px; margin: 2px 0; padding: 0 13px 0 12px; border-left: 1px solid #c4c4c4; position: relative; font-size: 12px; }
.pane-title { display: flex; height: 44px; padding-top: 12px; align-items: flex-start; }
.pane-title h2 { margin: 0; flex: 1; font-size: 20px; line-height: 28px; font-weight: 300; color: #217346; white-space: nowrap; }
.pane-title button { width: 18px; height: 18px; margin-right: 24px; }
.pane-title button:last-child { margin-right: 2px; }
.pane-tabs { display: flex; height: 28px; align-items: center; padding-left: 5px; }
.pane-tabs .strong { font-weight: 700; gap: 3px; color: #222; padding-right: 4px; border-right: 1px solid var(--line); margin-right: 5px; }
.pane-tabs .strong svg { color: #2b88d8; }
.pane-icons { display: flex; align-items: center; gap: 10px; height: 38px; margin-top: 1px; padding-left: 3px; }
.pane-icons button { width: 32px; height: 32px; }
.pane-icons .on { border: 1px solid #444; border-radius: 4px; background: #fff; }
.pane-rule { display: flex; align-items: flex-end; height: 11px; margin: 0 1px 2px 0; }
.pane-rule i { width: 137px; height: 1px; background: #ccc; }
.pane-rule i:last-child { flex: 1; }
.pane h3 { margin: 0; display: flex; align-items: center; gap: 6px; height: 30px; padding-left: 8px; font-size: 12px; font-weight: 700; }
.pane h3.closed { padding-left: 11px; gap: 7px; margin-top: 10px; }
.options { padding-left: 23px; }
.options p { margin: 0; height: 16px; color: #444; }
.checks { padding: 1px 0 0 10px; }
.checks > label { display: flex; align-items: center; gap: 5px; height: 25px; }
.checks input { appearance: none; width: 13px; height: 13px; border: 1px solid #888; border-radius: 2px; background: #fff; position: relative; }
.checks input:checked { background: var(--green); border-color: var(--green); }
.checks input:checked::after { content: ""; position: absolute; left: 2px; top: 2px; width: 7px; height: 4px; border: solid #fff; border-width: 0 0 1px 1px; transform: rotate(-45deg); }
.sep-row { display: flex; justify-content: space-between; align-items: center; height: 32px; color: #444; padding-right: 21px; }
.combo { width: 91px; height: 23px; border: 2px solid #000; border-radius: 4px; background: #fff; display: flex; align-items: center; padding: 0 4px 0 5px; color: #222; }
.combo::before { content: ""; width: 1px; height: 15px; background: #000; margin-right: 3px; }
.combo select { appearance: none; flex: 1; }
.reset { height: 24px; margin-top: 1px; padding: 0 7px; background: #fff; border: 1px solid var(--line); border-radius: 4px; }
.redbox { position: absolute; left: 32px; top: 216px; width: 145px; height: 85px; border: 7px solid #f00; border-radius: 8px; box-shadow: 1px 2px 6px rgba(0, 0, 0, .6), inset 1px 2px 5px rgba(0, 0, 0, .5); }
.b19 { left: 187px; top: 214px; }
.b20 { left: 173px; top: 379px; }

/* status bar */
.status { flex: none; height: 22px; border-top: 1px solid #c6c6c6; background: #f5f5f5; display: flex; align-items: center; padding: 0 18px 0 7px; }
.status > svg { margin-left: 20px; }
.views { margin-left: auto; display: flex; }
.views button { width: 40px; height: 21px; }
.views .on { background: #e0e0e0; }
.zoom { display: flex; align-items: center; margin-left: 5px; }
.zoom input { appearance: none; width: 100px; height: 12px; margin: 0 5px; background: linear-gradient(#666, #666) center / 100% 1px no-repeat; }
.zoom input::-webkit-slider-thumb { appearance: none; width: 5px; height: 11px; background: #666; }
.zoom span { margin-left: 12px; width: 34px; }
```
